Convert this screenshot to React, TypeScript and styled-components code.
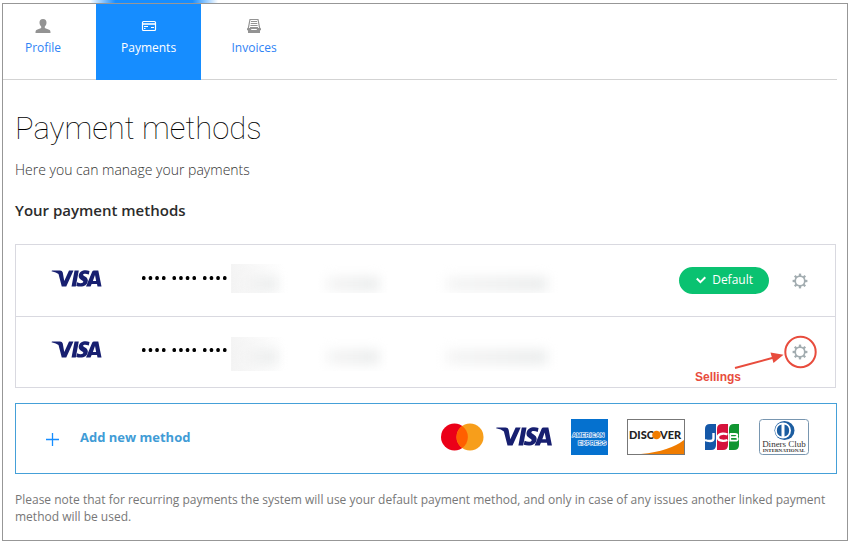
import React from "react";
import styled, { createGlobalStyle, css } from "styled-components";

const Global = createGlobalStyle`
  *, *::before, *::after { box-sizing: border-box; }
  body { margin: 0; background: #fff; color: #333; font-family: "Open Sans", "Noto Sans", sans-serif; }
  h1, h2, p, ul { margin: 0; padding: 0; }
  ul { list-style: none; }
  button { font: inherit; color: inherit; background: none; border: 0; padding: 0; cursor: pointer; }
`;

const Page = styled.div`
  position: relative;
  padding: 3px 4px 4px 2px;
`;

const Glow = styled.div`
  position: absolute;
  top: 0;
  left: 90px;
  width: 128px;
  height: 3px;
  background: linear-gradient(90deg, #fff, #168dff 20%, #168dff 80%, #fff);
`;

const Frame = styled.div`
  border: 1px solid #979797;
  padding: 0 10px 15px 0;
`;

const Tabs = styled.nav`
  display: flex;
  gap: 13px;
  border-bottom: 1px solid #d3d3d3;
`;

const Tab = styled.a<{ $active?: boolean }>`
  display: flex;
  flex-direction: column;
  align-items: center;
  gap: 5px;
  min-width: 80px;
  height: 76px;
  margin-bottom: -1px;
  padding: 14px 12px 0;
  font-size: 12px;
  line-height: 18px;
  text-decoration: none;
  color: #2f83f5;

  svg { color: #939393; }

  ${(p) =>
    p.$active &&
    css`
      padding: 14px 25px 0;
      background: #168dff;
      color: #fff;
      svg { color: #fff; }
    `}
`;

const Main = styled.main`
  padding: 29px 0 0 12px;
`;

const Title = styled.h1`
  font-family: Roboto, sans-serif;
  font-size: 31px;
  line-height: 40px;
  font-weight: 100;
  color: #000;
`;

const Subtitle = styled.p`
  margin-top: 11px;
  font-size: 14px;
  line-height: 20px;
  font-weight: 300;
  color: #333;
`;

const Heading = styled.h2`
  margin-top: 20px;
  font-size: 15px;
  line-height: 20px;
  font-weight: 600;
  color: #2b2b2b;
`;

const Cards = styled.ul`
  margin: 24px 1px 0 0;
  border: 1px solid #d9d9e0;
`;

const Card = styled.li`
  position: relative;
  display: grid;
  grid-template-columns: 91px 89px 87px 112px 1fr auto 24px;
  align-items: center;
  height: 71px;
  padding: 0 23px 0 35px;

  & + & { border-top: 1px solid #d9d9e0; }
`;

const BrandCell = styled.div`
  display: flex;
  padding-bottom: 5px;
`;

const Digits = styled.div`
  display: flex;
  padding-bottom: 6px;
`;

const Hidden = styled.div<{ $w: number; $tall?: boolean; $edge?: boolean }>`
  width: ${(p) => p.$w}px;
  height: ${(p) => (p.$tall ? 34 : 29)}px;
  margin-top: ${(p) => (p.$tall ? 3 : -4)}px;
  overflow: hidden;
  background: ${(p) =>
    p.$edge ? "linear-gradient(90deg, #f4f4f4, #fafafa 50%, #fff 90%)" : "transparent"};

  &::before {
    content: "";
    display: block;
    width: ${(p) => (p.$edge ? "56%" : "74%")};
    height: 14px;
    margin: 13px auto 0 ${(p) => (p.$edge ? "12px" : "13%")};
    background: linear-gradient(90deg, #f4f4f4, #e9ebeb);
    filter: blur(6px);
  }
`;

const Badge = styled.span`
  display: flex;
  align-items: center;
  justify-content: center;
  gap: 6px;
  height: 27px;
  margin-right: 19px;
  padding: 0 16px 1px 17px;
  border-radius: 14px;
  background: #0ac271;
  color: #fff;
  font-size: 12px;
  line-height: 18px;
`;

const SettingsButton = styled.button`
  grid-column: 7;
  display: flex;
  justify-content: center;
  height: 24px;
  width: 24px;
  align-items: center;
  color: #a2acb0;
`;

const Callout = styled.div`
  position: absolute;
  top: 18px;
  right: 18px;
  width: 123px;
  height: 51px;
  pointer-events: none;
  color: #e84c3d;

  svg { display: block; position: absolute; inset: 0; }
`;

const CalloutText = styled.span`
  position: absolute;
  left: 1px;
  bottom: 1px;
  font: bold 12px/16px "Liberation Sans", Arial, sans-serif;
`;

const AddMethod = styled.button`
  display: flex;
  align-items: center;
  width: 100%;
  height: 71px;
  margin-top: 15px;
  padding: 0 27px 0 29px;
  border: 1px solid #45a0d8;
  text-align: left;
`;

const AddLabel = styled.span`
  flex: 1;
  margin-left: 21px;
  padding-bottom: 3px;
  font-size: 13px;
  line-height: 20px;
  font-weight: 700;
  color: #419cd6;
`;

const Brands = styled.span`
  display: flex;
  align-items: center;
  gap: 19px;
  padding-bottom: 4px;

  svg { display: block; }
`;

const BrandPair = styled.span`
  display: flex;
  align-items: center;
  gap: 12px;
`;

const Note = styled.p`
  margin-top: 17px;
  font-size: 12px;
  line-height: 17px;
  color: #777;
`;

const UserIcon = () => (
  <svg width="16" height="16" viewBox="0 0 16 16" fill="currentColor" aria-hidden="true">
    <path d="M8 1c2.4 0 3.6 1.5 3.5 3.7C11.400 6.500 10.700 7.700 9.800 8.500V10c1.300.9 3.500 1 4.800 2.100.8.700.9 1.700.9 2.900H.5c0-1.200.1-2.200.9-2.900C2.700 11 4.900 10.900 6.200 10V8.500C5.300 7.700 4.600 6.500 4.500 4.700 4.400 2.500 5.600 1 8 1Z" />
  </svg>
);

const CardIcon = () => (
  <svg width="16" height="16" viewBox="0 0 16 16" fill="none" stroke="currentColor" aria-hidden="true">
    <rect x="1.500" y="3.500" width="13" height="9" rx="1" strokeWidth="1.200" />
    <path d="M1.500 6h13" strokeWidth="1.600" />
    <path d="M3 8.500h4M3 10.500h1.500M10 9.500h3" strokeWidth="1.200" />
  </svg>
);

const InvoiceIcon = () => (
  <svg width="16" height="16" viewBox="0 0 16 16" fill="none" stroke="currentColor" aria-hidden="true">
    <path d="M4 1.500h8l1.700 9H2.300Z" strokeWidth="1.200" />
    <path d="M5 3.500h6M4.700 5.500h6.600M4.400 7.500h7.200M4 9.500h8" />
    <path d="M1 10.300h3.500l1 1.700h5l1-1.700H15v1.600l-1 .6V15H2v-2.500l-1-.6Z" fill="currentColor" stroke="none" />
  </svg>
);

const GearIcon = () => (
  <svg width="16" height="16" viewBox="-8 -8 16 16" fill="none" stroke="currentColor" aria-hidden="true">
    <circle r="4.800" strokeWidth="1.700" />
    {[0, 45, 90, 135, 180, 225, 270, 315].map((a) => (
      <path key={a} d="M0-5V-7.400" strokeWidth="2.300" transform={`rotate(${a})`} />
    ))}
  </svg>
);

const CheckIcon = () => (
  <svg width="10" height="8" viewBox="0 0 10 8" fill="none" stroke="#fff" strokeWidth="2" aria-hidden="true">
    <path d="m.8 2.500 3.600 3.700L9.300 1.300" />
  </svg>
);

const PlusIcon = () => (
  <svg width="14" height="14" viewBox="0 0 14 14" stroke="#168dff" strokeWidth="1.300" aria-hidden="true">
    <path d="M7.500 1v13M1 7.500h13" />
  </svg>
);

const Visa = ({ width }: { width: number }) => (
  <svg width={width} height={Math.round(width * 0.34)} viewBox="0 0 100 34" fill="#171f70" role="img" aria-label="Visa">
    <path d="M1 1H17Q21.500 1 22.500 5L25.500 22 35 1H44L29.500 33H20.500L14 8Q10 4.500 0 2.400Z" />
    <path d="M46 1h8.500l-6 32H40Z" />
    <path d="M76 1.800 74.600 9C69 6.700 63.600 6.700 63.200 9.500c-.3 3 10.500 4 9.400 12.700C71.500 32 61 35.400 49.500 31.900L51 24.400c6.500 3 12.200 2.300 12.700-.9.500-3.500-10.300-4-9.200-12.800C55.700 1.300 66.400-1.700 76 1.800Z" />
    <path fillRule="evenodd" d="M85 1h8.600L100 33h-8l-1-5H80.300l-2.200 5H69L81.500 3Q82.500 1 85 1Zm2 9-4.200 11.800h6.500Z" />
  </svg>
);

const Dots = () => (
  <svg width="86" height="5" viewBox="0 0 86 5" role="img" aria-label="Card number hidden">
    {[0, 30.5, 61].flatMap((g) =>
      [0, 6.7, 13.3, 20].map((d) => <rect key={g + d} x={g + d} y="1" width="3.500" height="4" rx="1.500" fill="#000" />)
    )}
  </svg>
);

const Mastercard = () => (
  <svg width="44" height="28" viewBox="0 0 44 28" role="img" aria-label="Mastercard">
    <circle cx="14.500" cy="14" r="13.500" fill="#eb0018" />
    <circle cx="30" cy="14" r="13.500" fill="#f79e1b" />
    <path d="M22.200 3a13.500 13.500 0 0 1 0 22 13.500 13.500 0 0 1 0-22Z" fill="#ff5f00" />
  </svg>
);

const Amex = () => (
  <svg width="37" height="36" viewBox="0 0 37 36" role="img" aria-label="American Express">
    <rect width="37" height="36" fill="#0571cf" />
    <g fill="#0571cf" stroke="#fff" strokeWidth="1.200" paintOrder="stroke" fontFamily="Liberation Sans, Arial, sans-serif" fontWeight="700">
      <text x="1" y="18" fontSize="6">AMERICAN</text>
      <text x="7" y="26" fontSize="6">EXPRESS</text>
    </g>
  </svg>
);

const Discover = () => (
  <svg width="58" height="36" viewBox="0 0 58 36" role="img" aria-label="Discover">
    <rect x=".5" y=".5" width="57" height="35" fill="#fff" stroke="#777" />
    <path d="M57 21v14H14Q43 32 57 21Z" fill="#f07c00" />
    <g fill="#222" fontFamily="Lato, sans-serif" fontWeight="900" fontSize="11">
      <text x="2" y="20">DISC</text>
      <text x="33" y="20">VER</text>
    </g>
    <circle cx="29.500" cy="16" r="4.300" fill="#f07c00" />
  </svg>
);

const Jcb = () => (
  <svg width="36" height="28" viewBox="0 0 36 28" role="img" aria-label="JCB">
    <path d="M6 1h6v21q0 5-5 5H1V6q0-5 5-5Z" fill="#1558a8" />
    <path d="M18 1h6v21q0 5-5 5h-6V6q0-5 5-5Z" fill="#d5133c" />
    <path d="M30 1h5v21q0 5-5 5h-5V6q0-5 5-5Z" fill="#119632" />
    <g fill="none" stroke="#fff" strokeWidth="2.400">
      <path d="M9.500 10v5.500q0 2.500-3.500 2.500-3 0-5-1" />
      <path d="M23.500 11.500Q21 10.500 18.500 10.700 14 11 14 14.300T18.500 17.800q2.500.2 5-.8" />
      <path d="M26 11h5q2.300 0 2.300 1.500T31 14.200h-5 5.300q2.500 0 2.500 1.800T31.300 17.700H26.200V10.500" strokeWidth="1.800" />
    </g>
  </svg>
);

const Diners = () => (
  <svg width="50" height="36" viewBox="0 0 50 36" role="img" aria-label="Diners Club International">
    <rect x=".5" y=".5" width="49" height="35" rx="3" fill="#fff" stroke="#7896b0" />
    <ellipse cx="25.500" cy="11.500" rx="10" ry="9.500" fill="#1c5da0" />
    <circle cx="24" cy="11.500" r="8" fill="#fff" />
    <path d="M22.500 5.500a6.200 6.200 0 0 0 0 12ZM25.500 5.500a6.200 6.200 0 0 1 0 12Z" fill="#1c5da0" />
    <g fill="#333" textAnchor="middle" fontFamily="Liberation Serif, serif">
      <text x="25" y="27.500" fontSize="9">Diners Club</text>
      <text x="25" y="33" fontSize="5" fontWeight="700">INTERNATIONAL</text>
    </g>
  </svg>
);

const cards = [
  { id: "first", isDefault: true },
  { id: "second", isDefault: false },
];

export default function App() {
  return (
    <Page>
      <Global />
      <Glow />
      <Frame>
        <Tabs aria-label="Account">
          <Tab href="#profile"><UserIcon />Profile</Tab>
          <Tab href="#payments" $active aria-current="page"><CardIcon />Payments</Tab>
          <Tab href="#invoices"><InvoiceIcon />Invoices</Tab>
        </Tabs>
        <Main>
          <Title>Payment methods</Title>
          <Subtitle>Here you can manage your payments</Subtitle>
          <Heading>Your payment methods</Heading>
          <Cards>
            {cards.map(({ id, isDefault }) => (
              <Card key={id}>
                <BrandCell><Visa width={51} /></BrandCell>
                <Digits><Dots /></Digits>
                <Hidden $w={60} $edge $tall={!isDefault} />
                <Hidden $w={70} $tall={!isDefault} />
                <Hidden $w={134} $tall={!isDefault} />
                {isDefault && <Badge><CheckIcon />Default</Badge>}
                <SettingsButton type="button" aria-label="Card settings"><GearIcon /></SettingsButton>
                {!isDefault && (
                  <Callout>
                    <svg width="123" height="51" viewBox="0 0 123 51" fill="none" stroke="currentColor" aria-hidden="true">
                      <circle cx="106.500" cy="17" r="15.200" strokeWidth="2" />
                      <path d="M41 33 80 22.500" strokeWidth="2" />
                      <path d="m76.500 17.500 13 2.200-10 8.300Z" fill="currentColor" stroke="none" />
                    </svg>
                    <CalloutText>Sellings</CalloutText>
                  </Callout>
                )}
              </Card>
            ))}
          </Cards>
          <AddMethod type="button">
            <PlusIcon />
            <AddLabel>Add new method</AddLabel>
            <Brands>
              <BrandPair>
                <Mastercard />
                <Visa width={56} />
              </BrandPair>
              <Amex />
              <Discover />
              <Jcb />
              <Diners />
            </Brands>
          </AddMethod>
          <Note>
            Please note that for recurring payments the system will use your default payment method, and only in case of
            any issues another linked payment method will be used.
          </Note>
        </Main>
      </Frame>
    </Page>
  );
}
